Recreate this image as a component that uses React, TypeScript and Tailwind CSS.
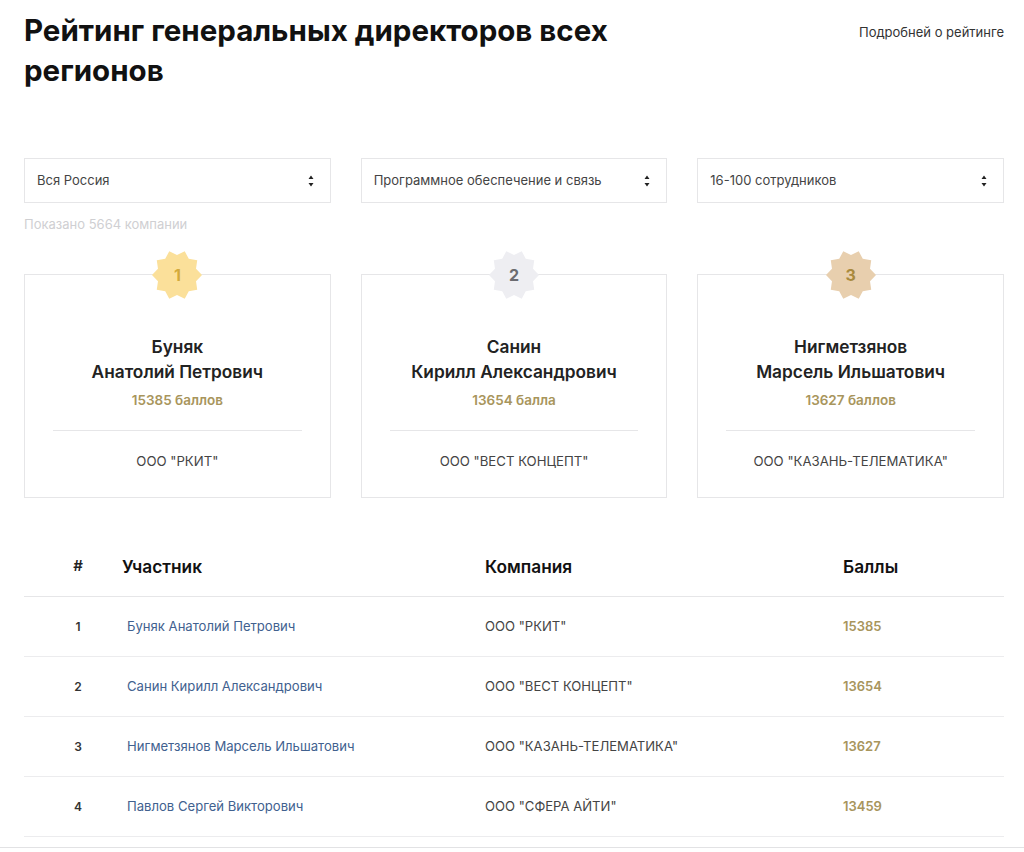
import { Fragment } from "react";

const filters = ["Вся Россия", "Программное обеспечение и связь", "16-100 сотрудников"];

const leaders = [
  {
    place: 1,
    first: "Буняк",
    rest: "Анатолий Петрович",
    score: "15385 баллов",
    company: 'ООО "РКИТ"',
    fill: "#fbe09a",
    text: "text-[#d3aa3c]",
  },
  {
    place: 2,
    first: "Санин",
    rest: "Кирилл Александрович",
    score: "13654 балла",
    company: 'ООО "ВЕСТ КОНЦЕПТ"',
    fill: "#eeeef2",
    text: "text-[#6b6b70]",
  },
  {
    place: 3,
    first: "Нигметзянов",
    rest: "Марсель Ильшатович",
    score: "13627 баллов",
    company: 'ООО "КАЗАНЬ-ТЕЛЕМАТИКА"',
    fill: "#e8cfae",
    text: "text-[#a98a3e]",
  },
];

const rows = [
  { n: 1, name: "Буняк Анатолий Петрович", company: 'ООО "РКИТ"', score: 15385 },
  { n: 2, name: "Санин Кирилл Александрович", company: 'ООО "ВЕСТ КОНЦЕПТ"', score: 13654 },
  { n: 3, name: "Нигметзянов Марсель Ильшатович", company: 'ООО "КАЗАНЬ-ТЕЛЕМАТИКА"', score: 13627 },
  { n: 4, name: "Павлов Сергей Викторович", company: 'ООО "СФЕРА АЙТИ"', score: 13459 },
];

// ten-pointed seal, tips at 18deg + 36deg * k
function starPoints() {
  const pts: string[] = [];
  for (let i = 0; i < 20; i++) {
    const r = i % 2 === 0 ? 25 : 20;
    const a = (i * Math.PI) / 10 + Math.PI / 10;
    pts.push(`${(25 + r * Math.sin(a)).toFixed(2)},${(25 - r * Math.cos(a)).toFixed(2)}`);
  }
  return pts.join(" ");
}

function Badge({ place, fill, text }: { place: number; fill: string; text: string }) {
  return (
    <div className="absolute left-1/2 top-[-25px] h-[50px] w-[50px] -translate-x-1/2">
      <svg viewBox="0 0 50 50" className="h-[50px] w-[50px]">
        <polygon points={starPoints()} fill={fill} />
      </svg>
      <span className={`absolute inset-0 flex items-center justify-center text-[16px] font-bold ${text}`}>
        {place}
      </span>
    </div>
  );
}

function SelectArrows() {
  return (
    <svg viewBox="0 0 6 12" className="h-3 w-1.5">
      <path d="M3 0.5 L5.5 4 H0.5 Z M3 11.5 L0.5 8 H5.5 Z" fill="#222" />
    </svg>
  );
}

export default function App() {
  return (
    <div className="h-[852px] overflow-hidden bg-white font-['Inter',sans-serif] text-[#1a1a1a]">
      <div className="pl-6 pr-5">
        {/* Header */}
        <div className="flex items-start justify-between pt-[10px]">
          <h1 className="w-[640px] text-[29.5px] font-bold leading-10 text-[#111]">
            Рейтинг генеральных директоров всех регионов
          </h1>
          <a className="mt-[12px] text-[13px] leading-5 text-[#333]">Подробней о рейтинге</a>
        </div>

        {/* Filters */}
        <div className="mt-[68px] grid grid-cols-3 gap-[30px]">
          {filters.map((f) => (
            <div
              key={f}
              className="flex h-[45px] items-center justify-between border border-[#e6e6e8] pl-3 pr-4 text-[13px] text-[#444]"
            >
              <span className="pt-px">{f}</span>
              <SelectArrows />
            </div>
          ))}
        </div>
        <p className="mt-[13px] text-[13px] leading-4 text-[#cfcfd2]">Показано 5664 компании</p>

        {/* Top 3 */}
        <div className="mt-[42px] grid grid-cols-3 gap-[30px]">
          {leaders.map((l) => (
            <div key={l.place} className="relative h-[224px] border border-[#e6e6e8] px-7 pt-[59px] text-center">
              <Badge place={l.place} fill={l.fill} text={l.text} />
              <div className="text-[17.3px] font-semibold leading-[25px] text-[#222]">
                {l.first}
                <br />
                {l.rest}
              </div>
              <div className="mt-[6px] text-[13.5px] font-semibold leading-5 text-[#a8955c]">{l.score}</div>
              <div className="mt-[20px] border-t border-[#e6e6e8] pt-[20px] text-[13.2px] leading-5 text-[#444]">
                {l.company}
              </div>
            </div>
          ))}
        </div>

        {/* Table */}
        <div className="mt-[39px] grid grid-cols-[98px_363px_358px_1fr] text-[13.1px]">
          <div className="flex h-[60px] items-center justify-center border-b border-[#e6e6e8] pl-[10px] text-[15px] font-semibold text-[#222]">
            #
          </div>
          <div className="flex h-[60px] items-center border-b border-[#e6e6e8] text-[17.3px] font-semibold text-[#111]">
            Участник
          </div>
          <div className="flex h-[60px] items-center border-b border-[#e6e6e8] text-[17.3px] font-semibold text-[#111]">
            Компания
          </div>
          <div className="flex h-[60px] items-center border-b border-[#e6e6e8] text-[17.3px] font-semibold text-[#111]">
            Баллы
          </div>
          {rows.map((r) => (
            <Fragment key={r.n}>
              <div className="flex h-[60px] items-center justify-center border-b border-[#ececee] pl-[10px] text-[12px] font-semibold text-[#333]">
                {r.n}
              </div>
              <div className="flex h-[60px] items-center border-b border-[#ececee] pl-[5px] text-[#41618f]">
                {r.name}
              </div>
              <div className="flex h-[60px] items-center border-b border-[#ececee] text-[#444]">{r.company}</div>
              <div className="flex h-[60px] items-center border-b border-[#ececee] text-[13px] font-semibold text-[#a8955c]">
                {r.score}
              </div>
            </Fragment>
          ))}
        </div>
      </div>
      <div className="mt-[10px] border-t border-[#e2e2e4]" />
    </div>
  );
}
